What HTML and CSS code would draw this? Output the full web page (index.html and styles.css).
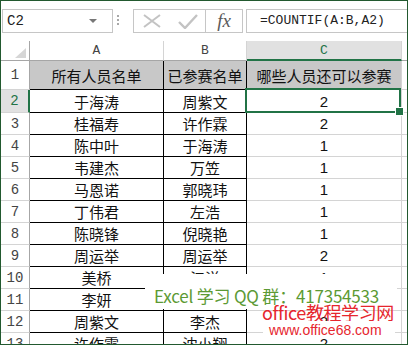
FILE: index.html
```html
<!DOCTYPE html>
<html lang="zh-CN">
<head>
    <meta charset="UTF-8">
    <meta name="viewport" content="width=device-width, initial-scale=1.0">
    <title>COUNTIF 名单</title>
    <link rel="stylesheet" href="styles.css">
</head>
<body>
    <div class="window">
        <div class="formula-bar">
            <div class="name-box">
                <span>C2</span>
                <span class="dropdown"></span>
            </div>
            <div class="grip"><span></span><span></span><span></span></div>
            <div class="buttons">
                <div class="edit-btns">
                    <svg width="18" height="14" viewBox="0 0 18 14">
                        <path d="M1 1 L17 13 M17 1 L1 13" stroke="#c3c3c3" stroke-width="2" fill="none"/>
                    </svg>
                    <svg width="20" height="15" viewBox="0 0 20 15">
                        <path d="M1 8 L7 14 L19 1" stroke="#c3c3c3" stroke-width="2.4" fill="none"/>
                    </svg>
                </div>
                <div class="fx">fx</div>
            </div>
            <div class="formula-input">=COUNTIF(A:B,A2)</div>
        </div>

        <div class="sheet">
            <div class="corner">
                <svg width="11" height="10" viewBox="0 0 11 10"><polygon points="11,0 11,10 0,10" fill="#d6d6d6"/></svg>
            </div>
            <div class="col-head">A</div>
            <div class="col-head">B</div>
            <div class="col-head active">C</div>
            <div class="col-head last"></div>

            <div class="rh">1</div>
            <div class="cell a head">所有人员名单</div>
            <div class="cell b head">已参赛名单</div>
            <div class="cell c head">哪些人员还可以参赛</div>
            <div class="cell d"></div>

            <div class="rh active">2</div>
            <div class="cell a">于海涛</div>
            <div class="cell b">周紫文</div>
            <div class="cell c num selected">2</div>
            <div class="cell d"></div>

            <div class="rh">3</div>
            <div class="cell a">桂福寿</div>
            <div class="cell b">许作霖</div>
            <div class="cell c num">2</div>
            <div class="cell d"></div>

            <div class="rh">4</div>
            <div class="cell a">陈中叶</div>
            <div class="cell b">于海涛</div>
            <div class="cell c num">1</div>
            <div class="cell d"></div>

            <div class="rh">5</div>
            <div class="cell a">韦建杰</div>
            <div class="cell b">万笠</div>
            <div class="cell c num">1</div>
            <div class="cell d"></div>

            <div class="rh">6</div>
            <div class="cell a">马恩诺</div>
            <div class="cell b">郭晓玮</div>
            <div class="cell c num">1</div>
            <div class="cell d"></div>

            <div class="rh">7</div>
            <div class="cell a">丁伟君</div>
            <div class="cell b">左浩</div>
            <div class="cell c num">1</div>
            <div class="cell d"></div>

            <div class="rh">8</div>
            <div class="cell a">陈晓锋</div>
            <div class="cell b">倪晓艳</div>
            <div class="cell c num">1</div>
            <div class="cell d"></div>

            <div class="rh">9</div>
            <div class="cell a">周运举</div>
            <div class="cell b">周运举</div>
            <div class="cell c num">2</div>
            <div class="cell d"></div>

            <div class="rh">10</div>
            <div class="cell a">美桥</div>
            <div class="cell b">江洋</div>
            <div class="cell c num">1</div>
            <div class="cell d"></div>

            <div class="rh">11</div>
            <div class="cell a">李妍</div>
            <div class="cell b">刘洋</div>
            <div class="cell c num">1</div>
            <div class="cell d"></div>

            <div class="rh">12</div>
            <div class="cell a">周紫文</div>
            <div class="cell b">李杰</div>
            <div class="cell c num">2</div>
            <div class="cell d"></div>

            <div class="rh">13</div>
            <div class="cell a">许作霖</div>
            <div class="cell b">沈小翔</div>
            <div class="cell c num">2</div>
            <div class="cell d"></div>
        </div>

        <div class="watermark">
            <div class="qq">Excel 学习 QQ 群：417354533</div>
            <div class="site">office教程学习网</div>
            <div class="url">www.office68.com</div>
        </div>
    </div>
</body>
</html>
```

FILE: styles.css
```css
* {
    margin: 0;
    padding: 0;
    box-sizing: border-box;
}

body {
    background: #fff;
    font-family: "Noto Sans CJK SC", sans-serif;
}

.window {
    position: relative;
    width: 408px;
    height: 345px;
    border: 1px solid #22592f;
    overflow: hidden;
    background: #fff;
}

/* formula bar */
.formula-bar {
    display: flex;
    align-items: flex-start;
    height: 40px;
    padding: 8px 0 0 1px;
}

.name-box {
    width: 111px;
    height: 24px;
    border: 1px solid #c6c6c6;
    display: flex;
    align-items: center;
    justify-content: space-between;
    padding: 0 15px 0 4px;
    font: 14px "Liberation Mono", monospace;
    color: #222;
}

.dropdown {
    width: 0;
    height: 0;
    border-left: 4px solid transparent;
    border-right: 4px solid transparent;
    border-top: 4px solid #777;
}

.grip {
    display: flex;
    flex-direction: column;
    gap: 2px;
    margin: 6px 0 0 4px;
}

.grip span {
    width: 2px;
    height: 2px;
    background: #a8a8a8;
}

.buttons {
    display: flex;
    width: 110px;
    height: 24px;
    margin-left: 14px;
    border: 1px solid #c6c6c6;
}

.edit-btns {
    width: 71px;
    display: flex;
    align-items: center;
    gap: 17px;
    padding-left: 9px;
}

.fx {
    flex: 1;
    border-left: 1px solid #c6c6c6;
    font: italic 19px "Liberation Serif", serif;
    color: #5a5a5a;
    text-align: center;
    line-height: 21px;
}

.formula-input {
    width: 161px;
    height: 24px;
    margin-left: 3px;
    border: 1px solid #c6c6c6;
    border-right: none;
    padding-left: 13px;
    font: 13px "Liberation Mono", monospace;
    line-height: 22px;
    color: #222;
}

/* grid */
.sheet {
    display: grid;
    grid-template-columns: 29px 134px 83px 155px 5px;
    grid-template-rows: 20px 29px 23px;
    grid-auto-rows: 22px;
}

.sheet > div {
    display: flex;
    align-items: center;
    justify-content: center;
}

.corner {
    justify-content: flex-end !important;
    align-items: flex-end !important;
    padding: 0 3px 2px 0;
    border-right: 1px solid #a6a6a6;
    border-bottom: 1px solid #a6a6a6;
}

.col-head {
    font: 13px "Liberation Mono", monospace;
    color: #444;
    border-right: 1px solid #d4d4d4;
    border-bottom: 1px solid #a6a6a6;
}

.col-head.active {
    background: #e1e1e1;
    color: #217346;
    border-bottom: 2px solid #217346;
}

.col-head.last {
    border-right: none;
}

.rh {
    font: 14px "Liberation Mono", monospace;
    color: #444;
    border-right: 1px solid #a6a6a6;
    border-bottom: 1px solid #d4d4d4;
}

.rh.active {
    background: #e1e1e1;
    color: #217346;
    border-right: 2px solid #217346;
}

.cell {
    font-size: 15px;
    color: #111;
    border-right: 1px solid #000;
    border-bottom: 1px solid #000;
}

.cell.head {
    background: #c8c8c8;
}

.cell.c {
    border-right-color: #d4d4d4;
    border-bottom-color: #d4d4d4;
}

.cell.d {
    border-right: none;
    border-bottom: 1px solid #d4d4d4;
}

.num {
    font: 15px "Liberation Sans", sans-serif;
}

.selected {
    position: relative;
    z-index: 2;
}

.selected::after {
    content: "";
    position: absolute;
    left: -2px;
    top: -2px;
    right: 0;
    bottom: -1px;
    border: 2px solid #217346;
}

.selected::before {
    content: "";
    position: absolute;
    right: -3px;
    bottom: -4px;
    width: 7px;
    height: 7px;
    background: #217346;
    border: 1px solid #fff;
    z-index: 1;
}

/* watermark */
.watermark {
    position: absolute;
    left: 144px;
    top: 273px;
    display: flex;
    flex-direction: column;
    white-space: nowrap;
}

.qq {
    width: 252px;
    height: 35px;
    background: #fff;
    color: #5c9a34;
    font: 17px "Noto Sans CJK SC", sans-serif;
    letter-spacing: -0.2px;
    line-height: 44px;
    padding-left: 9px;
    overflow: hidden;
}

.site {
    height: 18px;
    margin: -6px 0 0 117px;
    color: #e6262e;
    font: 18px "Noto Sans CJK SC", sans-serif;
    letter-spacing: -0.4px;
    line-height: 18px;
}

.url {
    width: 132px;
    height: 18px;
    margin-left: 118px;
    background: #fff;
    color: #e6262e;
    font: 14px "Liberation Sans", sans-serif;
    line-height: 18px;
    padding-left: 6px;
}
```
